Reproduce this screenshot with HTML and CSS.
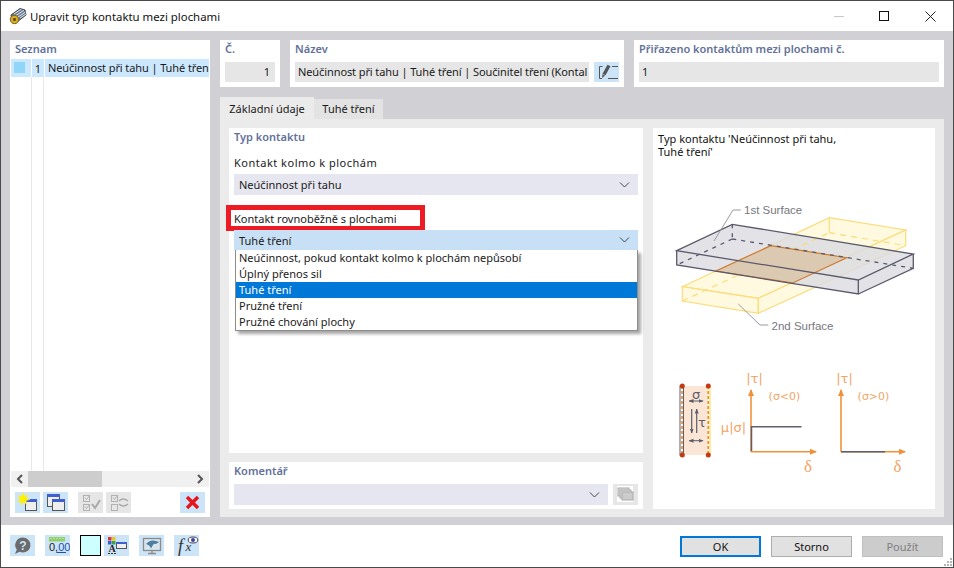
FILE: index.html
```html
<!DOCTYPE html>
<html lang="cs">
<head>
    <meta charset="UTF-8">
    <title>Upravit typ kontaktu mezi plochami</title>
    <link rel="stylesheet" href="styles.css">
</head>
<body>
<div class="window">
    <header class="titlebar">
        <svg class="app-icon" width="18" height="18" viewBox="0 0 18 18">
            <path d="M2 8 L11 1.5 L16 3 L17 8 L8 15 L3 13 Z" fill="#6f7f96" stroke="#39414e"/>
            <path d="M5 7 L12.5 2 M7 8.5 L15 3.2 M9 10 L16.5 5 M11 11 L17 7" stroke="#dfe4ec"/>
            <circle cx="5.5" cy="12.5" r="4.2" fill="#d8ac2c" stroke="#7d6210"/>
            <rect x="4.3" y="11.2" width="2.4" height="2.6" fill="#4c3a06"/>
        </svg>
        <span class="title">Upravit typ kontaktu mezi plochami</span>
        <div class="win-controls">
            <span class="win-min"></span>
            <span class="win-max"></span>
            <svg class="win-close" width="11" height="11" viewBox="0 0 11 11"><path d="M.5 .5 L10.5 10.5 M10.5 .5 L.5 10.5" stroke="#222" fill="none"/></svg>
        </div>
    </header>

    <div class="content">
        <aside class="list-panel">
            <div class="group-title list-title">Seznam</div>
            <div class="list-body">
                <div class="list-row">
                    <span class="list-swatch-cell"><span class="list-swatch"></span></span>
                    <span class="list-num">1</span>
                    <span class="list-name">Neúčinnost při tahu | Tuhé třen</span>
                </div>
                <div class="list-rest">
                    <span class="list-col-a"></span>
                    <span class="list-col-b"></span>
                </div>
            </div>
            <div class="hscroll">
                <svg width="17" height="16" viewBox="0 0 17 16"><path d="M11 4 L7 8 L11 12" stroke="#555" stroke-width="2" fill="none"/></svg>
                <div class="hscroll-track"><div class="hscroll-thumb"></div></div>
                <svg width="17" height="16" viewBox="0 0 17 16"><path d="M6 4 L10 8 L6 12" stroke="#555" stroke-width="2" fill="none"/></svg>
            </div>
            <div class="list-tools">
                <button class="icon-btn">
                    <svg width="25" height="21" viewBox="0 0 25 21">
                        <rect x="10.5" y="7.5" width="11" height="11" fill="#eee" stroke="#555"/><rect x="10" y="7" width="12" height="3" fill="#3f5fd0"/>
                        <path d="M8 0 L9.3 4 L13 2.5 L11.2 6 L15 7.5 L11 8.6 L12 12.5 L8.5 10.3 L6 13.5 L5.8 9.5 L2 9.5 L5 7 L2.5 3.5 L6.5 4.3 Z" fill="#fff200" stroke="#ece48a" stroke-width=".5"/>
                    </svg>
                </button>
                <button class="icon-btn tool-gap">
                    <svg width="25" height="21" viewBox="0 0 25 21">
                        <rect x="4.5" y="2.5" width="12" height="12" fill="#eee" stroke="#555"/><rect x="4" y="2" width="13" height="3" fill="#3f5fd0"/>
                        <rect x="9.5" y="7.5" width="12" height="11" fill="#eee" stroke="#555"/><rect x="9" y="7" width="13" height="3" fill="#3f5fd0"/>
                    </svg>
                </button>
                <button class="icon-btn disabled tool-sep">
                    <svg width="25" height="21" viewBox="0 0 25 21" fill="none" stroke="#b2b2b2">
                        <rect x="5.5" y="3.5" width="6" height="6"/><rect x="5.5" y="12.5" width="6" height="6"/>
                        <path d="M7 5.5 L8.5 7.5 L12 3 M7 14.5 L8.5 16.5 L12 12"/>
                        <path d="M14 12 L17 16 L22 8" stroke="#aaa" stroke-width="2"/>
                    </svg>
                </button>
                <button class="icon-btn disabled tool-gap">
                    <svg width="25" height="21" viewBox="0 0 25 21" fill="none" stroke="#b2b2b2">
                        <rect x="5.5" y="3.5" width="6" height="6"/><rect x="5.5" y="12.5" width="6" height="6"/>
                        <path d="M7 5.5 L8.5 7.5 L12 3"/>
                        <path d="M13 9 Q17 5 22 9 M22 12 Q17 16 13 12" stroke="#aaa" stroke-width="1.5"/>
                    </svg>
                </button>
                <button class="icon-btn tool-end">
                    <svg width="25" height="21" viewBox="0 0 25 21"><path d="M7 5 L18 16 M18 5 L7 16" stroke="#e8141c" stroke-width="3.4" fill="none"/></svg>
                </button>
            </div>
        </aside>

        <main class="main">
            <div class="top-row">
                <section class="card no-card">
                    <div class="group-title">Č.</div>
                    <div class="field field-num">1</div>
                </section>
                <section class="card name-card">
                    <div class="group-title">Název</div>
                    <div class="name-line">
                        <div class="field field-name">Neúčinnost při tahu | Tuhé tření | Součinitel tření (Kontal</div>
                        <button class="icon-btn">
                            <svg width="25" height="20" viewBox="0 0 25 20" fill="none">
                                <path d="M8.5 4.5 H5.5 V16.5 H8 M14 16.5 H24 M18 4.5 H24" stroke="#555"/>
                                <path d="M15 3.5 L10 12.5" stroke="#555" stroke-width="3.4"/>
                                <path d="M8.6 12 L8 16 L11 13.8 Z" fill="#555"/>
                            </svg>
                        </button>
                    </div>
                </section>
                <section class="card assigned-card">
                    <div class="group-title">Přiřazeno kontaktům mezi plochami č.</div>
                    <div class="field">1</div>
                </section>
            </div>

            <div class="tabs">
                <div class="tab tab-active">Základní údaje</div>
                <div class="tab">Tuhé tření</div>
            </div>

            <div class="tab-panel">
                <div class="form-col">
                    <section class="card contact-card">
                        <div class="group-title">Typ kontaktu</div>
                        <label class="form-label label-first">Kontakt kolmo k plochám</label>
                        <div class="combo">
                            <span>Neúčinnost při tahu</span>
                            <svg class="chevron" width="11" height="6" viewBox="0 0 11 6"><path d="M1 .5 L5.5 5 L10 .5" stroke="#444" fill="none"/></svg>
                        </div>
                        <label class="form-label label-second">Kontakt rovnoběžně s plochami<span class="highlight"></span></label>
                        <div class="combo combo-open">
                            <span>Tuhé tření</span>
                            <svg class="chevron" width="11" height="6" viewBox="0 0 11 6"><path d="M1 .5 L5.5 5 L10 .5" stroke="#444" fill="none"/></svg>
                            <ul class="dropdown">
                                <li>Neúčinnost, pokud kontakt kolmo k plochám nepůsobí</li>
                                <li>Úplný přenos sil</li>
                                <li class="selected">Tuhé tření</li>
                                <li>Pružné tření</li>
                                <li>Pružné chování plochy</li>
                            </ul>
                        </div>
                    </section>
                    <section class="card comment-card">
                        <div class="group-title">Komentář</div>
                        <div class="comment-line">
                            <div class="combo comment-combo">
                                <svg class="chevron" width="11" height="6" viewBox="0 0 11 6"><path d="M1 .5 L5.5 5 L10 .5" stroke="#444" fill="none"/></svg>
                            </div>
                            <button class="icon-btn disabled comment-btn">
                                <svg width="25" height="21" viewBox="0 0 25 21">
                                    <rect x="4" y="2" width="16" height="16" fill="#fff"/>
                                    <rect x="5" y="4" width="11" height="8" fill="#ddd" stroke="#aaa"/>
                                    <rect x="7" y="6" width="11" height="8" fill="#ddd" stroke="#aaa"/>
                                    <rect x="9" y="8" width="11" height="8" fill="#ccc" stroke="#aaa"/>
                                </svg>
                            </button>
                        </div>
                    </section>
                </div>

                <section class="card figure-card">
                    <div class="figure-title">Typ kontaktu 'Neúčinnost při tahu,<br>Tuhé tření'</div>
                    <svg class="figure" width="282" height="349" viewBox="653 160 282 349">
                        <defs>
                            <marker id="orangeHead" markerWidth="7" markerHeight="7" refX="6" refY="3" orient="auto" markerUnits="userSpaceOnUse"><path d="M0 0 L7 3 L0 6 Z" fill="#f0913a"/></marker>
                            <marker id="greyHead" markerWidth="5" markerHeight="5" refX="4.5" refY="2" orient="auto-start-reverse" markerUnits="userSpaceOnUse"><path d="M0 0 L5 2 L0 4 Z" fill="#5c5c6c"/></marker>
                        </defs>

                        <!-- lower plate -->
                        <g stroke="#fbdc78" stroke-width="1.2" fill="#fff9e0">
                            <path d="M682.3 286.7 L829.3 217.7 L905.7 230 L758.3 298.3 Z"/>
                            <path d="M682.3 286.7 L682.3 301 L758.3 313.3 L758.3 298.3 Z"/>
                            <path d="M758.3 298.3 L758.3 313.3 L905.7 245.7 L905.7 230 Z"/>
                            <path d="M829.3 217.7 V232.7" fill="none"/>
                        </g>
                        <!-- upper plate -->
                        <path d="M676.7 250.7 L732.3 224.3 L913.3 254 L913.3 268.3 L858.3 294 L676.7 265 Z" fill="#dcdce2" fill-opacity=".82"/>
                        <path d="M829.3 232.7 L905.7 245.7 M682.3 301 L829.3 232.7" stroke="#fbdc78" stroke-width="1.2" stroke-dasharray="6 5" fill="none"/>
                        <path d="M770.7 245.7 L846.7 257.7 L792.7 283 L716 271 Z" fill="#dcc9b2" stroke="#d07a2c" stroke-width="1.2"/>
                        <g stroke="#5a5a6c" stroke-width="1.3" fill="none">
                            <path d="M676.7 250.7 L732.3 224.3 L913.3 254 L858.3 280 Z"/>
                            <path d="M676.7 250.7 V265 L858.3 294 V280 M858.3 294 L913.3 268.3 V254"/>
                            <path d="M732.3 224.3 V239 M732.3 239 L676.7 265 M732.3 239 L913.3 268.3" stroke-dasharray="4 5"/>
                        </g>
                        <path d="M740.7 210 H733 L714 241 M738.3 304 L760 325 H768.3" stroke="#9a9aa2" fill="none"/>
                        <text class="fig-label" x="744" y="214">1st Surface</text>
                        <text class="fig-label" x="771.5" y="330">2nd Surface</text>

                        <!-- contact scheme -->
                        <rect x="683" y="386" width="25" height="69" fill="#fbe6d6"/>
                        <rect x="680" y="386" width="3.5" height="69" fill="#fff" stroke="#5e5e70"/>
                        <path d="M682 386 V455" stroke="#e8801e" stroke-width="1.5" stroke-dasharray="3 2"/>
                        <path d="M710 386 V455" stroke="#fde68a" stroke-width="1.5"/>
                        <path d="M708.3 386 V455" stroke="#e8901e" stroke-width="1.6" stroke-dasharray="3 2"/>
                        <g fill="#c23a10">
                            <circle cx="682.3" cy="386" r="2.5"/><circle cx="682.3" cy="455" r="2.5"/>
                            <circle cx="708.3" cy="386" r="2.5"/><circle cx="708.3" cy="455" r="2.5"/>
                        </g>
                        <g stroke="#5c5c6c" fill="none">
                            <path d="M689 401 H703" marker-start="url(#greyHead)" marker-end="url(#greyHead)"/>
                            <path d="M689 440.7 H703" marker-start="url(#greyHead)" marker-end="url(#greyHead)"/>
                            <path d="M691.7 409 V433" stroke-width="1.2" marker-end="url(#greyHead)"/>
                            <path d="M696.7 433 V409" stroke-width="1.2" marker-end="url(#greyHead)"/>
                        </g>
                        <text class="fig-sym fig-big fig-grey" x="696" y="399" text-anchor="middle">σ</text>
                        <text class="fig-sym fig-big fig-grey" x="702" y="427" text-anchor="middle">τ</text>

                        <!-- diagrams -->
                        <path d="M751 451.7 V390" stroke="#f0913a" stroke-width="1.6" fill="none" marker-end="url(#orangeHead)"/>
                        <path d="M751 451.7 H816" stroke="#f0913a" stroke-width="1.6" fill="none" marker-end="url(#orangeHead)"/>
                        <path d="M751.5 451 V426.7 H801.5" stroke="#5e5e70" stroke-width="1.5" fill="none"/>
                        <path d="M841 451.7 V390" stroke="#f0913a" stroke-width="1.6" fill="none" marker-end="url(#orangeHead)"/>
                        <path d="M841 451.7 H905" stroke="#f0913a" stroke-width="1.6" fill="none" marker-end="url(#orangeHead)"/>
                        <path d="M841 451.7 H885" stroke="#5e5e70" stroke-width="1.6" fill="none"/>
                        <text class="fig-sym fig-big" x="754.5" y="383" text-anchor="middle">|τ|</text>
                        <text class="fig-sym" x="784.5" y="400" text-anchor="middle">(σ&lt;0)</text>
                        <text class="fig-sym fig-big" x="733.5" y="432" text-anchor="middle">μ|σ|</text>
                        <text class="fig-sym fig-delta" x="808" y="472" text-anchor="middle">δ</text>
                        <text class="fig-sym fig-big" x="844.5" y="383" text-anchor="middle">|τ|</text>
                        <text class="fig-sym" x="873.5" y="400" text-anchor="middle">(σ&gt;0)</text>
                        <text class="fig-sym fig-delta" x="897.5" y="472" text-anchor="middle">δ</text>
                    </svg>
                </section>
            </div>
        </main>
    </div>

    <footer class="bottom">
        <button class="icon-btn">
            <svg width="25" height="21" viewBox="0 0 25 21">
                <path d="M13 2.5 A7.8 7.5 0 1 1 9.5 16.8 L5 19 L6.8 14.5 A7.8 7.5 0 0 1 13 2.5 Z" fill="#6b6b6b"/>
                <text class="help-mark" x="13" y="14.5" text-anchor="middle">?</text>
            </svg>
        </button>
        <button class="icon-btn bottom-gap">
            <svg width="25" height="21" viewBox="0 0 25 21">
                <rect x="4" y="2" width="16" height="4.5" fill="#8fd06a"/>
                <path d="M6 3 V4 M9 3 V4 M12 3 V4 M15 3 V4 M18 3 V4" stroke="#dff0cc"/>
                <text class="units-mark" x="4" y="15.5">0,<tspan class="units-blue">00</tspan></text>
                <path d="M11.5 17.5 H21" stroke="#1f4fa8"/>
            </svg>
        </button>
        <span class="color-box bottom-gap"></span>
        <button class="icon-btn icon-tight">
            <svg width="25" height="21" viewBox="0 0 25 21">
                <rect x="4" y="2" width="3.5" height="3.5" fill="#e03030"/><rect x="8" y="2" width="3.5" height="3.5" fill="#e8c820"/>
                <rect x="4" y="6" width="3.5" height="3.5" fill="#3060d0"/><rect x="8" y="6" width="3.5" height="3.5" fill="#40a040"/>
                <rect x="12.5" y="7.5" width="10" height="6" fill="#eee" stroke="#555"/><rect x="12" y="7" width="11" height="2" fill="#3f5fd0"/>
                <text class="tiny-mark" x="8" y="16.5" text-anchor="middle">A</text>
                <path d="M4 18.5 H13" stroke="#333" stroke-dasharray="2 1"/>
            </svg>
        </button>
        <button class="icon-btn bottom-gap">
            <svg width="25" height="21" viewBox="0 0 25 21">
                <rect x="4.5" y="3.5" width="17" height="12" fill="#d8e4ee" stroke="#8a8a8a" stroke-width="1.3"/>
                <path d="M7 9 Q12 3 20 7 L17 9 Q15 8 14 10 L12 13.5 Q11 10 7 9 Z" fill="#4d7ea0"/>
                <path d="M13 16 V18 M9 18.5 H17" stroke="#8a8a8a" stroke-width="1.3"/>
            </svg>
        </button>
        <button class="icon-btn bottom-gap">
            <svg width="25" height="21" viewBox="0 0 25 21">
                <text class="fx-mark" x="4" y="17">f</text>
                <text class="fx-mark fx-small" x="11.5" y="16">x</text>
                <ellipse cx="19" cy="5" rx="4.8" ry="3" fill="#fff" stroke="#445"/>
                <circle cx="19" cy="5" r="2" fill="#4040a0"/>
            </svg>
        </button>
        <div class="dialog-buttons">
            <button class="dlg-btn dlg-default">OK</button>
            <button class="dlg-btn">Storno</button>
            <button class="dlg-btn dlg-disabled">Použít</button>
        </div>
        <svg class="grip" width="8" height="8" viewBox="0 0 8 8" fill="#b5b5b5">
            <rect x="6" y="0" width="2" height="2"/><rect x="3" y="3" width="2" height="2"/><rect x="6" y="3" width="2" height="2"/>
            <rect x="0" y="6" width="2" height="2"/><rect x="3" y="6" width="2" height="2"/><rect x="6" y="6" width="2" height="2"/>
        </svg>
    </footer>
</div>
</body>
</html>
```

FILE: styles.css
```css
* {
    box-sizing: border-box;
}
html, body {
    margin: 0;
    padding: 0;
    height: 100%;
}
body {
    background-color: #4a4a4a;
    font-family: "Noto Sans", "Open Sans", sans-serif;
    font-size: 11px;
    color: #1a1a1a;
    padding: 1px 1px 1px 1px;
    overflow: hidden;
}
button {
    font-family: inherit;
}
.window {
    height: 566px;
    display: flex;
    flex-direction: column;
    background-color: #fff;
}

/* title bar */
.titlebar {
    height: 30px;
    display: flex;
    align-items: center;
    padding-left: 8px;
    background-color: #fff;
}
.title {
    margin-left: 3px;
    font-size: 11.4px;
    color: #111;
}
.win-controls {
    margin-left: auto;
    display: flex;
    align-items: center;
    padding-right: 17px;
}
.win-min {
    width: 10px;
    height: 1px;
    background-color: #c8c8c8;
}
.win-max {
    width: 10px;
    height: 10px;
    border: 1px solid #111;
    margin-left: 35px;
}
.win-close {
    margin-left: 36px;
}

/* main area */
.content {
    height: 494px;
    display: flex;
    gap: 10px;
    padding: 9px 9px 8px;
    background-color: #d0d0d5;
}
.card {
    background-color: #fff;
}
.group-title {
    font-weight: 600;
    color: #62719a;
    line-height: 18px;
}

/* left list */
.list-panel {
    width: 200px;
    display: flex;
    flex-direction: column;
    background-color: #fff;
}
.list-title {
    padding: 0 5px;
    height: 19px;
}
.list-body {
    flex: 1;
    display: flex;
    flex-direction: column;
    margin: 0 1px;
}
.list-row {
    height: 18px;
    display: flex;
    align-items: center;
    background-color: #cce8ff;
    white-space: nowrap;
    overflow: hidden;
}
.list-swatch-cell {
    flex: none;
    width: 21px;
    height: 18px;
    border-right: 1px solid #fff;
    padding: 3px 0 0 3px;
}
.list-swatch {
    display: block;
    width: 11px;
    height: 11px;
    background-color: #8fd6f8;
}
.list-num {
    flex: none;
    width: 12px;
    text-align: right;
    padding-right: 3px;
}
.list-name {
    flex: none;
    padding-left: 3px;
    border-left: 1px solid #fff;
    line-height: 18px;
    letter-spacing: -.1px;
}
.list-rest {
    flex: 1;
    display: flex;
}
.list-col-a {
    width: 21px;
    border-right: 1px solid #e8e8e8;
}
.list-col-b {
    width: 12px;
    border-right: 1px solid #e8e8e8;
}
.hscroll {
    height: 16px;
    margin: 0 1px;
    display: flex;
    background-color: #f0f0f0;
}
.hscroll-track {
    flex: 1;
}
.hscroll-thumb {
    width: 74px;
    height: 16px;
    background-color: #cdcdcd;
}
.list-tools {
    display: flex;
    padding: 5px 5px 4px;
}
.icon-btn {
    width: 25px;
    height: 21px;
    padding: 0;
    border: none;
    background-color: #cce4f7;
    display: block;
    flex: none;
}
.icon-btn svg {
    display: block;
}
.icon-btn.disabled {
    background-color: #e6e6e6;
}
.tool-gap {
    margin-left: 3px;
}
.tool-sep {
    margin-left: 10px;
}
.tool-end {
    margin-left: auto;
}

/* right side */
.main {
    flex: 1;
    display: flex;
    flex-direction: column;
}
.top-row {
    flex: none;
    display: flex;
    gap: 10px;
    height: 47px;
}
.top-row .card {
    padding: 0 5px;
}
.no-card {
    width: 60px;
}
.name-card {
    width: 334px;
}
.assigned-card {
    flex: 1;
}
.field {
    height: 20px;
    margin-top: 4px;
    line-height: 20px;
    background-color: #e6e6e6;
    padding: 0 3px;
    white-space: nowrap;
    overflow: hidden;
}
.field-num {
    text-align: right;
    padding-right: 5px;
}
.name-line {
    display: flex;
    gap: 5px;
    margin-top: 4px;
}
.field-name {
    margin-top: 0;
    flex: 1;
    background-color: #e6e6e6;
    letter-spacing: -.1px;
}
.name-line .icon-btn {
    height: 20px;
}
.tabs {
    flex: none;
    display: flex;
    align-items: flex-end;
    height: 22px;
    margin-top: 10px;
}
.tab {
    height: 20px;
    line-height: 20px;
    width: 69px;
    text-align: center;
    background-color: #e3e3e3;
}
.tab-active {
    height: 22px;
    line-height: 24px;
    width: 94px;
    background-color: #ebebeb;
}
.tab-panel {
    flex: none;
    height: 398px;
    display: flex;
    gap: 10px;
    padding: 9px 9px 8px;
    background-color: #ebebeb;
}
.form-col {
    width: 414px;
    display: flex;
    flex-direction: column;
    gap: 9px;
}
.contact-card {
    flex: 1;
    padding: 0 5px;
}
.form-label {
    display: block;
    line-height: 16px;
    position: relative;
}
.label-first {
    margin-top: 9px;
    letter-spacing: .5px;
}
.label-second {
    margin-top: 16px;
}
.highlight {
    position: absolute;
    left: -8px;
    top: -6px;
    width: 199px;
    height: 26px;
    border: 5px solid #ed1c24;
}
.combo {
    position: relative;
    height: 21px;
    margin-top: 3px;
    display: flex;
    align-items: center;
    padding: 0 5px;
    background-color: #e6e6f0;
}
.chevron {
    margin-left: auto;
    margin-right: 3px;
}
.combo-open {
    height: 20px;
    margin-top: 3px;
    background-color: #c8e0f5;
}
.dropdown {
    position: absolute;
    left: 1px;
    right: 0;
    top: 20px;
    margin: 0;
    padding: 0;
    list-style: none;
    background-color: #fff;
    border: 1px solid #8c8c8c;
    border-top: none;
    box-shadow: 3px 3px 3px rgba(0, 0, 0, .35);
}
.dropdown li {
    height: 16px;
    line-height: 16px;
    padding-left: 3px;
}
.dropdown .selected {
    background-color: #0078d7;
    color: #fff;
}
.comment-card {
    height: 47px;
    padding: 0 5px;
}
.comment-line {
    display: flex;
    gap: 5px;
    margin-top: 4px;
}
.comment-combo {
    flex: 1;
    margin-top: 0;
}
.figure-card {
    flex: 1;
    display: flex;
    flex-direction: column;
}
.figure-title {
    padding: 4px 5px 0;
    line-height: 13px;
    height: 32px;
    color: #111;
}
.figure {
    display: block;
}
.fig-label {
    font-family: "Liberation Sans", sans-serif;
    font-size: 11.5px;
    fill: #77777f;
}
.fig-sym {
    font-family: "DejaVu Sans", sans-serif;
    font-size: 11px;
    fill: #f2a566;
}
.fig-big {
    font-size: 13px;
}
.fig-delta {
    font-family: "Liberation Serif", serif;
    font-size: 17px;
}
.fig-grey {
    fill: #5c5c6c;
}

/* bottom bar */
.bottom {
    flex: 1;
    display: flex;
    align-items: flex-start;
    padding: 10px 9px 0;
    position: relative;
    background-color: #fff;
}
.bottom-gap {
    margin-left: 10px;
}
.icon-tight {
    margin-left: 3px;
}
.color-box {
    width: 21px;
    height: 21px;
    border: 1px solid #000;
    background-color: #ccffff;
}
.dialog-buttons {
    margin-left: auto;
    margin-top: 1px;
    margin-right: 1px;
    display: flex;
    gap: 10px;
}
.dlg-btn {
    width: 81px;
    height: 21px;
    padding: 0;
    font-size: 11px;
    color: #111;
    background-color: #e1e1e1;
    border: 1px solid #adadad;
}
.dlg-default {
    border: 2px solid #0078d7;
}
.dlg-disabled {
    background-color: #cccccc;
    border-color: #bfbfbf;
    color: #808080;
}
.grip {
    position: absolute;
    right: 1px;
    bottom: 1px;
}
.help-mark {
    font-family: "Liberation Sans", sans-serif;
    font-size: 12px;
    font-weight: 700;
    fill: #cce4f7;
}
.units-mark {
    font-family: "Liberation Sans", sans-serif;
    font-size: 11px;
    fill: #222;
}
.units-blue {
    fill: #1f4fa8;
}
.tiny-mark {
    font-family: "Liberation Serif", serif;
    font-size: 10px;
    font-weight: 700;
    fill: #222;
}
.fx-mark {
    font-family: "Liberation Serif", serif;
    font-size: 18px;
    font-style: italic;
    fill: #333;
}
.fx-small {
    font-size: 13px;
}
```
